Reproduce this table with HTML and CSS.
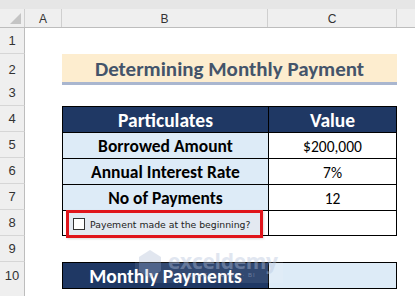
FILE: index.html
```html
<!DOCTYPE html>
<html>
<head>
<meta charset="utf-8">
<link rel="stylesheet" href="styles.css">
</head>
<body>
<div class="sheet">
  <div class="topbar"></div>
  <div class="row colhead">
    <div class="corner"><span class="tri"></span></div>
    <div class="ch">A</div>
    <div class="ch">B</div>
    <div class="ch">C</div>
    <div class="ch last"></div>
  </div>
  <div class="row"><div class="rh">1</div><div></div><div></div><div></div><div></div></div>
  <div class="row"><div class="rh">2</div><div></div><div class="title">Determining Monthly Payment</div><div></div></div>
  <div class="row"><div class="rh">3</div><div></div><div></div><div></div><div></div></div>
  <div class="row"><div class="rh">4</div><div></div><div class="cell b head">Particulates</div><div class="cell c head">Value</div><div></div></div>
  <div class="row"><div class="rh">5</div><div></div><div class="cell b label">Borrowed Amount</div><div class="cell c">$200,000</div><div></div></div>
  <div class="row"><div class="rh">6</div><div></div><div class="cell b label">Annual Interest Rate</div><div class="cell c">7%</div><div></div></div>
  <div class="row"><div class="rh">7</div><div></div><div class="cell b label">No of Payments</div><div class="cell c">12</div><div></div></div>
  <div class="row"><div class="rh">8</div><div></div><div class="cell b bottom formcell">
      <div class="ctrl"><span class="box"></span><span class="ctrltext">Payement made at the beginning?</span></div>
    </div><div class="cell c bottom"></div><div></div></div>
  <div class="row"><div class="rh">9</div><div></div><div></div><div></div><div></div></div>
  <div class="row"><div class="rh">10</div><div></div><div class="cell b head bottom">Monthly Payments</div><div class="cell c result bottom"></div><div></div></div>
  <div class="row"><div class="rh"></div><div></div><div></div><div></div><div></div></div>
  <div class="watermark">
    <svg class="wm-icon" width="24" height="30" viewBox="0 0 24 30"><path d="M12 1 L23 8 L23 22 L12 29 L1 22 L1 8 Z" fill="#9fb0cf"/></svg>
    <div class="wm-text"><span class="wm-main">exceldemy</span><span class="wm-sub">EXCEL · DATA · BI</span></div>
  </div>
</div>
</body>
</html>
```
FILE: styles.css
```css
html, body { margin: 0; padding: 0; background: #fff; }
body { width: 415px; height: 296px; overflow: hidden; font-family: "Carlito", "Lato", "Liberation Sans", sans-serif; }
.sheet { position: relative; width: 415px; height: 296px; overflow: hidden; }
.topbar { height: 9px; background: #e6e6e6; }
.row { display: grid; grid-template-columns: 25px 37px 206px 129px 1fr; height: 26px; }
.colhead { height: 19px; background: #efefef; border-bottom: 1px solid #bdbdbd; box-sizing: border-box; }
.corner { position: relative; border-right: 1px solid #cfcfcf; }
.tri { position: absolute; right: 3px; bottom: 3px; width: 0; height: 0; border-left: 11px solid transparent; border-bottom: 11px solid #c4c4c4; }
.ch { border-right: 1px solid #cfcfcf; font-family: "Liberation Sans", sans-serif; font-size: 12px; color: #333; display: flex; align-items: center; justify-content: center; padding-top: 1px; }
.ch.last { border-right: none; }
.rh { background: #efefef; border-right: 1px solid #bdbdbd; border-bottom: 1px solid #d6d6d6; box-sizing: border-box; font-family: "Liberation Sans", sans-serif; font-size: 13px; color: #333; display: flex; align-items: center; justify-content: center; }
.title { grid-column: 3 / 5; background: #fdedcf; border-bottom: 3px solid #a9b6cf; box-sizing: border-box; display: flex; align-items: center; justify-content: center; font-weight: 700; font-size: 21px; color: #44546a; padding-top: 2px; }
.cell { box-sizing: border-box; border-top: 1px solid #000; border-left: 1px solid #000; display: flex; align-items: center; justify-content: center; font-size: 15.5px; color: #000; padding-top: 1px; }
.cell.c { border-right: 1px solid #000; }
.cell.bottom { border-bottom: 1px solid #000; }
.cell.head { background: #1f3864; color: #fff; font-weight: 700; font-size: 19.5px; }
.cell.label { background: #ddebf7; font-weight: 700; font-size: 17.5px; }
.cell.result { background: #ddebf7; }
.formcell { position: relative; }
.ctrl { position: absolute; left: 3px; top: -1px; width: 197px; height: 28px; box-sizing: border-box; border: 3px solid #e0141a; background: #e3e9f1; display: flex; align-items: center; gap: 5px; padding-left: 4px; z-index: 2; box-shadow: 1px 1px 2px rgba(0,0,0,0.15); }
.box { width: 12px; height: 12px; background: #fff; border: 1px solid #333; box-sizing: border-box; flex: none; }
.ctrltext { font-family: "DejaVu Sans", sans-serif; font-size: 9.3px; color: #222; white-space: nowrap; }
.watermark { position: absolute; left: 135px; top: 245px; width: 148px; height: 38px; background: rgba(255,255,255,0.15); display: flex; align-items: center; gap: 6px; padding-left: 3px; box-sizing: border-box; opacity: 0.6; z-index: 3; }
.wm-icon { flex: none; opacity: 0.5; }
.wm-text { display: flex; flex-direction: column; line-height: 1; }
.wm-main { font-family: "Open Sans", sans-serif; font-weight: 700; font-size: 21px; color: #b9c6de; opacity: 0.7; letter-spacing: -0.3px; }
.wm-sub { font-family: "Liberation Sans", sans-serif; font-size: 6px; color: #b0bdd6; letter-spacing: 1px; margin-left: 20px; opacity: 0.8; }
```
